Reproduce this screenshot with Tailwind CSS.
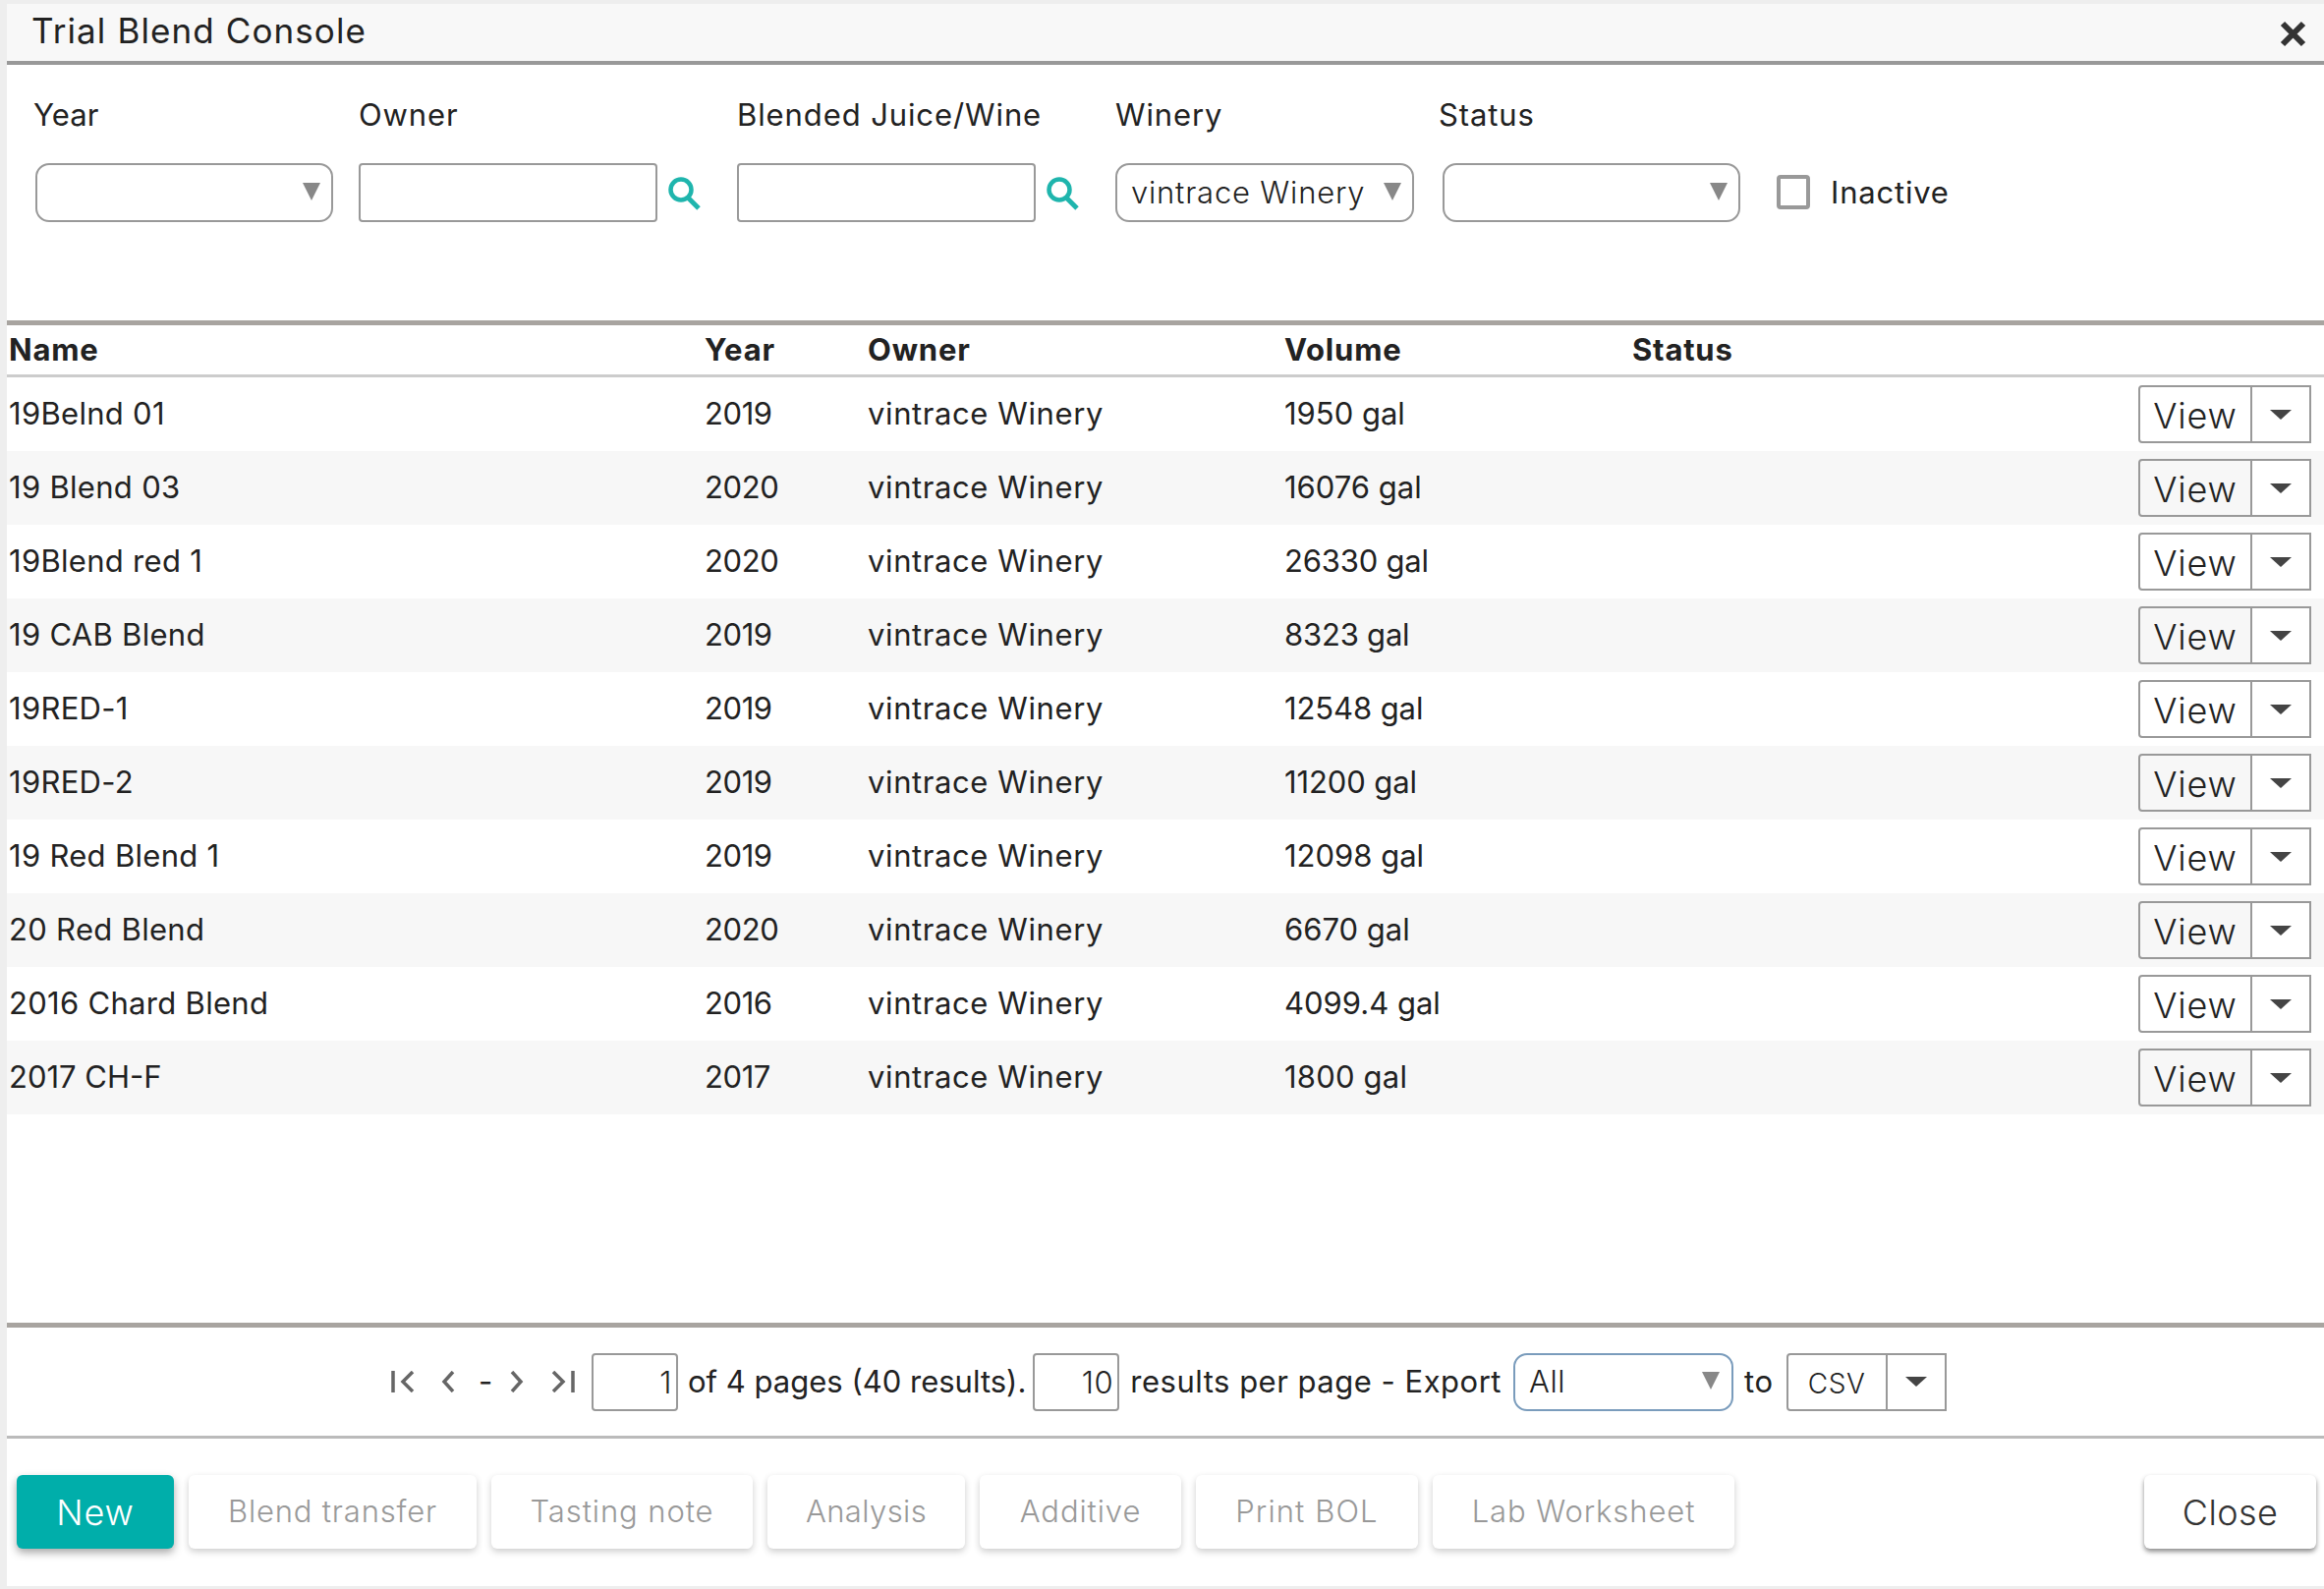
<!doctype html>
<html><head><meta charset="utf-8"><title>Trial Blend Console</title>
<script src="https://cdn.jsdelivr.net/npm/@tailwindcss/browser@4"></script></head>
<body class="m-0">
<div class="w-[2365px] h-[1617px] overflow-hidden bg-[#eeeeee] pl-[7px] pt-[4px] pb-[3px] font-['Inter',sans-serif] text-[#222222] text-[31px] tracking-[0.6px]">
<div class="h-full bg-white flex flex-col">
  <header class="h-[62px] border-b-[4px] border-[#999999] bg-[#f8f8f8] flex justify-between pl-[25px] pr-[18px]">
    <div class="text-[35px] leading-[54px] tracking-[1.1px]">Trial Blend Console</div>
    <svg class="w-[27px] h-[27px] mt-[17px]" viewBox="0 0 27 27"><path d="M3 3 L24 24 M24 3 L3 24" stroke="#333" stroke-width="6"/></svg>
  </header>

  <section class="h-[260px] flex items-start pt-[31px] pl-[29px]">
    <div class="w-[303px] flex flex-col gap-[29px]"><label class="h-[40px] leading-[40px] -ml-[2px] tracking-[0.1px]">Year</label>
      <div class="h-[60px] border-2 border-[#999999] rounded-[14px] flex items-center justify-end pr-[11px]"><svg class="w-[18px] h-[18px] mb-[3px]" viewBox="0 0 18 18"><path d="M0 0H18L9 18Z" fill="#888"/></svg></div></div>
    <div class="ml-[26px] w-[304px] flex flex-col gap-[29px]"><label class="h-[40px] leading-[40px] tracking-[0.9px]">Owner</label>
      <div class="flex items-center"><input class="w-full h-[60px] border-2 border-[#999999] rounded-[4px]"></div></div>
    <svg class="w-[35px] h-[35px] ml-[10px] mt-[82px]" viewBox="0 0 35 35"><circle cx="14" cy="14" r="10.5" fill="none" stroke="#1fb5ad" stroke-width="4.5"/><path d="M21 22L32 33" stroke="#1fb5ad" stroke-width="5"/></svg>
    <div class="ml-[36px] w-[304px] flex flex-col gap-[29px]"><label class="h-[40px] leading-[40px] whitespace-nowrap tracking-[0.9px]">Blended Juice/Wine</label>
      <div class="flex items-center"><input class="w-full h-[60px] border-2 border-[#999999] rounded-[4px]"></div></div>
    <svg class="w-[35px] h-[35px] ml-[10px] mt-[82px]" viewBox="0 0 35 35"><circle cx="14" cy="14" r="10.5" fill="none" stroke="#1fb5ad" stroke-width="4.5"/><path d="M21 22L32 33" stroke="#1fb5ad" stroke-width="5"/></svg>
    <div class="ml-[36px] w-[304px] flex flex-col gap-[29px]"><label class="h-[40px] leading-[40px] tracking-[0.9px]">Winery</label>
      <div class="h-[60px] border-2 border-[#999999] rounded-[14px] flex items-center justify-between pl-[14px] pr-[11px] font-light"><span class="whitespace-nowrap tracking-[0.8px]">vintrace Winery</span><svg class="w-[18px] h-[18px] mb-[3px]" viewBox="0 0 18 18"><path d="M0 0H18L9 18Z" fill="#888"/></svg></div></div>
    <div class="ml-[29px] w-[303px] flex flex-col gap-[29px]"><label class="h-[40px] leading-[40px] -ml-[4px] tracking-[0.9px]">Status</label>
      <div class="h-[60px] border-2 border-[#999999] rounded-[14px] flex items-center justify-end pr-[11px]"><svg class="w-[18px] h-[18px] mb-[3px]" viewBox="0 0 18 18"><path d="M0 0H18L9 18Z" fill="#888"/></svg></div></div>
    <div class="ml-[37px] mt-[69px] h-[60px] flex items-center gap-[21px]"><span class="w-[34px] h-[35px] border-[4px] border-[#999999] rounded-[4px] block -mt-[2px]"></span><span class="tracking-[0.8px]">Inactive</span></div>
  </section>

  <div class="h-[5px] bg-[#a8a4a0]"></div>

  <div class="h-[53px] border-b-[3px] border-[#cccccc] grid grid-cols-[710px_166px_424px_354px_1fr] items-center font-bold leading-[50px] tracking-[0.8px]">
    <div class="pl-[2px]">Name</div><div>Year</div><div>Owner</div><div>Volume</div><div>Status</div>
  </div>

  <div class="flex flex-col">
    <div class="h-[75px] grid grid-cols-[710px_166px_424px_354px_1fr_auto] items-center pr-[13px]"><div class="pl-[2px] tracking-[0.3px]">19Belnd 01</div><div class="tracking-[-0.4px]">2019</div><div>vintrace Winery</div><div class="tracking-[0px]">1950 gal</div><div></div><div class="w-[176px] h-[59px] border-2 border-[#999999] rounded-l-[4px] flex"><div class="flex-1 text-[36px] font-light flex items-center justify-center pt-[2px] tracking-[0.8px]">View</div><div class="w-[60px] h-full border-l-2 border-[#999999] bg-white flex items-center justify-center"><svg class="w-[22px] h-[10px]" viewBox="0 0 22 10"><path d="M0 0H22L11 10Z" fill="#444"/></svg></div></div></div>
    <div class="h-[75px] grid grid-cols-[710px_166px_424px_354px_1fr_auto] items-center pr-[13px] bg-[#f7f7f7]"><div class="pl-[2px] tracking-[0.3px]">19 Blend 03</div><div class="tracking-[-0.4px]">2020</div><div>vintrace Winery</div><div class="tracking-[0px]">16076 gal</div><div></div><div class="w-[176px] h-[59px] border-2 border-[#999999] rounded-l-[4px] flex"><div class="flex-1 text-[36px] font-light flex items-center justify-center pt-[2px] tracking-[0.8px]">View</div><div class="w-[60px] h-full border-l-2 border-[#999999] bg-white flex items-center justify-center"><svg class="w-[22px] h-[10px]" viewBox="0 0 22 10"><path d="M0 0H22L11 10Z" fill="#444"/></svg></div></div></div>
    <div class="h-[75px] grid grid-cols-[710px_166px_424px_354px_1fr_auto] items-center pr-[13px]"><div class="pl-[2px] tracking-[0.3px]">19Blend red 1</div><div class="tracking-[-0.4px]">2020</div><div>vintrace Winery</div><div class="tracking-[-0.2px]">26330 gal</div><div></div><div class="w-[176px] h-[59px] border-2 border-[#999999] rounded-l-[4px] flex"><div class="flex-1 text-[36px] font-light flex items-center justify-center pt-[2px] tracking-[0.8px]">View</div><div class="w-[60px] h-full border-l-2 border-[#999999] bg-white flex items-center justify-center"><svg class="w-[22px] h-[10px]" viewBox="0 0 22 10"><path d="M0 0H22L11 10Z" fill="#444"/></svg></div></div></div>
    <div class="h-[75px] grid grid-cols-[710px_166px_424px_354px_1fr_auto] items-center pr-[13px] bg-[#f7f7f7]"><div class="pl-[2px] tracking-[0.3px]">19 CAB Blend</div><div class="tracking-[-0.4px]">2019</div><div>vintrace Winery</div><div class="tracking-[-0.2px]">8323 gal</div><div></div><div class="w-[176px] h-[59px] border-2 border-[#999999] rounded-l-[4px] flex"><div class="flex-1 text-[36px] font-light flex items-center justify-center pt-[2px] tracking-[0.8px]">View</div><div class="w-[60px] h-full border-l-2 border-[#999999] bg-white flex items-center justify-center"><svg class="w-[22px] h-[10px]" viewBox="0 0 22 10"><path d="M0 0H22L11 10Z" fill="#444"/></svg></div></div></div>
    <div class="h-[75px] grid grid-cols-[710px_166px_424px_354px_1fr_auto] items-center pr-[13px]"><div class="pl-[2px] tracking-[0.3px]">19RED-1</div><div class="tracking-[-0.4px]">2019</div><div>vintrace Winery</div><div class="tracking-[-0.1px]">12548 gal</div><div></div><div class="w-[176px] h-[59px] border-2 border-[#999999] rounded-l-[4px] flex"><div class="flex-1 text-[36px] font-light flex items-center justify-center pt-[2px] tracking-[0.8px]">View</div><div class="w-[60px] h-full border-l-2 border-[#999999] bg-white flex items-center justify-center"><svg class="w-[22px] h-[10px]" viewBox="0 0 22 10"><path d="M0 0H22L11 10Z" fill="#444"/></svg></div></div></div>
    <div class="h-[75px] grid grid-cols-[710px_166px_424px_354px_1fr_auto] items-center pr-[13px] bg-[#f7f7f7]"><div class="pl-[2px] tracking-[0.3px]">19RED-2</div><div class="tracking-[-0.4px]">2019</div><div>vintrace Winery</div><div class="tracking-[-0.1px]">11200 gal</div><div></div><div class="w-[176px] h-[59px] border-2 border-[#999999] rounded-l-[4px] flex"><div class="flex-1 text-[36px] font-light flex items-center justify-center pt-[2px] tracking-[0.8px]">View</div><div class="w-[60px] h-full border-l-2 border-[#999999] bg-white flex items-center justify-center"><svg class="w-[22px] h-[10px]" viewBox="0 0 22 10"><path d="M0 0H22L11 10Z" fill="#444"/></svg></div></div></div>
    <div class="h-[75px] grid grid-cols-[710px_166px_424px_354px_1fr_auto] items-center pr-[13px]"><div class="pl-[2px] tracking-[0.3px]">19 Red Blend 1</div><div class="tracking-[-0.4px]">2019</div><div>vintrace Winery</div><div class="tracking-[0px]">12098 gal</div><div></div><div class="w-[176px] h-[59px] border-2 border-[#999999] rounded-l-[4px] flex"><div class="flex-1 text-[36px] font-light flex items-center justify-center pt-[2px] tracking-[0.8px]">View</div><div class="w-[60px] h-full border-l-2 border-[#999999] bg-white flex items-center justify-center"><svg class="w-[22px] h-[10px]" viewBox="0 0 22 10"><path d="M0 0H22L11 10Z" fill="#444"/></svg></div></div></div>
    <div class="h-[75px] grid grid-cols-[710px_166px_424px_354px_1fr_auto] items-center pr-[13px] bg-[#f7f7f7]"><div class="pl-[2px] tracking-[0.3px]">20 Red Blend</div><div class="tracking-[-0.4px]">2020</div><div>vintrace Winery</div><div class="tracking-[0px]">6670 gal</div><div></div><div class="w-[176px] h-[59px] border-2 border-[#999999] rounded-l-[4px] flex"><div class="flex-1 text-[36px] font-light flex items-center justify-center pt-[2px] tracking-[0.8px]">View</div><div class="w-[60px] h-full border-l-2 border-[#999999] bg-white flex items-center justify-center"><svg class="w-[22px] h-[10px]" viewBox="0 0 22 10"><path d="M0 0H22L11 10Z" fill="#444"/></svg></div></div></div>
    <div class="h-[75px] grid grid-cols-[710px_166px_424px_354px_1fr_auto] items-center pr-[13px]"><div class="pl-[2px] tracking-[0.3px]">2016 Chard Blend</div><div class="tracking-[-0.4px]">2016</div><div>vintrace Winery</div><div class="tracking-[0px]">4099.4 gal</div><div></div><div class="w-[176px] h-[59px] border-2 border-[#999999] rounded-l-[4px] flex"><div class="flex-1 text-[36px] font-light flex items-center justify-center pt-[2px] tracking-[0.8px]">View</div><div class="w-[60px] h-full border-l-2 border-[#999999] bg-white flex items-center justify-center"><svg class="w-[22px] h-[10px]" viewBox="0 0 22 10"><path d="M0 0H22L11 10Z" fill="#444"/></svg></div></div></div>
    <div class="h-[75px] grid grid-cols-[710px_166px_424px_354px_1fr_auto] items-center pr-[13px] bg-[#f7f7f7]"><div class="pl-[2px] tracking-[0px]">2017 CH-F</div><div class="tracking-[-0.4px]">2017</div><div>vintrace Winery</div><div class="tracking-[0.2px]">1800 gal</div><div></div><div class="w-[176px] h-[59px] border-2 border-[#999999] rounded-l-[4px] flex"><div class="flex-1 text-[36px] font-light flex items-center justify-center pt-[2px] tracking-[0.8px]">View</div><div class="w-[60px] h-full border-l-2 border-[#999999] bg-white flex items-center justify-center"><svg class="w-[22px] h-[10px]" viewBox="0 0 22 10"><path d="M0 0H22L11 10Z" fill="#444"/></svg></div></div></div>
  </div>

  <div class="flex-1"></div>
  <div class="h-[5px] bg-[#a8a4a0]"></div>

  <div class="h-[110px] flex items-center pl-[391px] whitespace-nowrap">
    <svg class="w-[24px] h-[22px]" viewBox="0 0 24 22"><path d="M2 0V22 M22 1L12 11L22 21" fill="none" stroke="#666" stroke-width="3.5"/></svg>
    <svg class="w-[14px] h-[22px] ml-[27px]" viewBox="0 0 14 22"><path d="M12 1L3 11L12 21" fill="none" stroke="#666" stroke-width="3.5"/></svg>
    <span class="ml-[24px] w-[9px] text-center">-</span>
    <svg class="w-[14px] h-[22px] ml-[23px]" viewBox="0 0 14 22"><path d="M2 1L11 11L2 21" fill="none" stroke="#666" stroke-width="3.5"/></svg>
    <svg class="w-[24px] h-[22px] ml-[28px]" viewBox="0 0 24 22"><path d="M22 0V22 M2 1L12 11L2 21" fill="none" stroke="#666" stroke-width="3.5"/></svg>
    <input class="ml-[17px] w-[88px] h-[59px] border-2 border-[#999999] rounded-[4px] text-right pr-[4px] font-light" value="1">
    <span class="ml-[10px] tracking-[0px]">of 4 pages (40 results).</span>
    <input class="ml-[7px] w-[88px] h-[59px] border-2 border-[#999999] rounded-[4px] text-right pr-[4px] font-light" value="10">
    <span class="ml-[11px] tracking-[0.5px]">results per page - Export</span>
    <div class="ml-[12px] w-[224px] h-[59px] border-2 border-[#7a9cbc] rounded-[14px] flex items-center justify-between pl-[14px] pr-[12px] font-light">All<svg class="w-[18px] h-[18px] mb-[3px]" viewBox="0 0 18 18"><path d="M0 0H18L9 18Z" fill="#888"/></svg></div>
    <span class="ml-[11px]">to</span>
    <div class="ml-[13px] w-[163px] h-[59px] border-2 border-[#999999] rounded-l-[4px] flex"><div class="flex-1 flex items-center justify-center text-[28px] font-light pt-[3px]">CSV</div><div class="w-[60px] border-l-2 border-[#999999] flex items-center justify-center"><svg class="w-[22px] h-[10px]" viewBox="0 0 22 10"><path d="M0 0H22L11 10Z" fill="#444"/></svg></div></div>
  </div>

  <div class="h-[3px] bg-[#bbbbbb]"></div>

  <footer class="h-[150px] flex items-start pt-[37px] pl-[10px] pr-[8px]">
    <button class="w-[160px] h-[75px] rounded-[6px] bg-[#00aeaa] text-white text-[36px] tracking-[0.8px] font-light shadow-[0_4px_8px_rgba(0,0,0,0.35)]">New</button>
    <button class="ml-[15px] w-[293px] h-[75px] rounded-[6px] bg-white text-[#999999] font-light tracking-[0.8px] shadow-[0_3px_7px_rgba(0,0,0,0.2)]">Blend transfer</button>
    <button class="ml-[15px] w-[266px] h-[75px] rounded-[6px] bg-white text-[#999999] font-light tracking-[0.9px] shadow-[0_3px_7px_rgba(0,0,0,0.2)]">Tasting note</button>
    <button class="ml-[15px] w-[201px] h-[75px] rounded-[6px] bg-white text-[#999999] font-light tracking-[0.4px] shadow-[0_3px_7px_rgba(0,0,0,0.2)]">Analysis</button>
    <button class="ml-[15px] w-[205px] h-[75px] rounded-[6px] bg-white text-[#999999] font-light tracking-[0.9px] shadow-[0_3px_7px_rgba(0,0,0,0.2)]">Additive</button>
    <button class="ml-[15px] w-[226px] h-[75px] rounded-[6px] bg-white text-[#999999] font-light tracking-[1.1px] shadow-[0_3px_7px_rgba(0,0,0,0.2)]">Print BOL</button>
    <button class="ml-[15px] w-[307px] h-[75px] rounded-[6px] bg-white text-[#999999] font-light tracking-[0.9px] shadow-[0_3px_7px_rgba(0,0,0,0.2)]">Lab Worksheet</button>
    <button class="ml-auto w-[175px] h-[75px] rounded-[6px] bg-white text-[#333333] text-[36px] tracking-[0.4px] font-light shadow-[0_3px_5px_rgba(0,0,0,0.45)]">Close</button>
  </footer>
</div>
</div>
</body></html>
